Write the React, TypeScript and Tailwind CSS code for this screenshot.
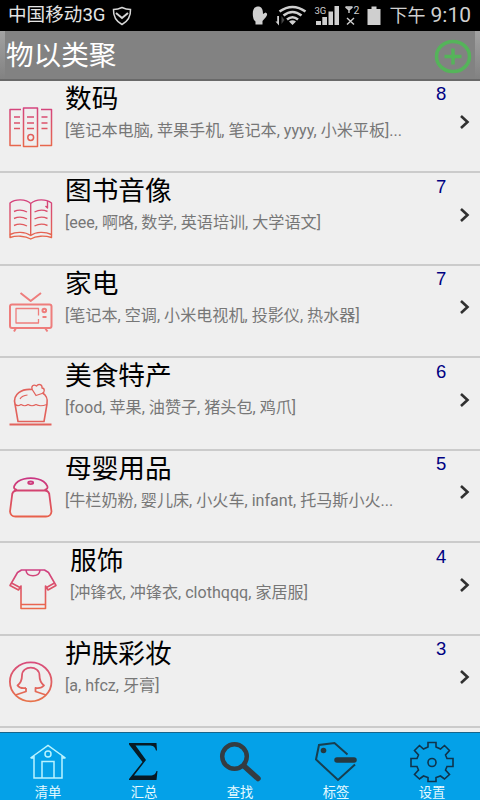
import type { ReactNode } from 'react'

interface Category {
  title: string
  items: string
  count: number
  icon: ReactNode
  indent?: boolean
}

const CATEGORIES: Category[] = [
  { title: '数码', items: '[笔记本电脑, 苹果手机, 笔记本, yyyy, 小米平板]...', count: 8, icon: <FilesIcon /> },
  { title: '图书音像', items: '[eee, 啊咯, 数学, 英语培训, 大学语文]', count: 7, icon: <BookIcon /> },
  { title: '家电', items: '[笔记本, 空调, 小米电视机, 投影仪, 热水器]', count: 7, icon: <TvIcon /> },
  { title: '美食特产', items: '[food, 苹果, 油赞子, 猪头包, 鸡爪]', count: 6, icon: <CakeIcon /> },
  { title: '母婴用品', items: '[牛栏奶粉, 婴儿床, 小火车, infant, 托马斯小火...', count: 5, icon: <BottleIcon /> },
  { title: '服饰', items: '[冲锋衣, 冲锋衣, clothqqq, 家居服]', count: 4, icon: <ShirtIcon />, indent: true },
  { title: '护肤彩妆', items: '[a, hfcz, 牙膏]', count: 3, icon: <BeautyIcon /> },
]

const TABS = [
  { label: '清单', icon: <HomeIcon /> },
  { label: '汇总', icon: <SumIcon /> },
  { label: '查找', icon: <SearchIcon /> },
  { label: '标签', icon: <TagIcon /> },
  { label: '设置', icon: <GearIcon /> },
]

function LineIcon({ id, from = '#d4437f', to = '#e8694a', width = 1.5, children }: {
  id: string
  from?: string
  to?: string
  width?: number
  children: ReactNode
}) {
  return (
    <svg width="50" height="44" viewBox="0 0 50 44" fill="none" stroke={`url(#${id})`} strokeWidth={width} strokeLinejoin="round" className="block">
      <defs>
        <linearGradient id={id} gradientUnits="userSpaceOnUse" x1="0" y1="1" x2="0" y2="42">
          <stop offset="0" stopColor={from} />
          <stop offset="1" stopColor={to} />
        </linearGradient>
      </defs>
      {children}
    </svg>
  )
}

function FilesIcon() {
  return (
    <LineIcon id="files" width={1.5}>
      <path d="M13 3.5H2V39.5H13M33 3.5H43.5V39.5H32M15.5 2H29.5V40.5H15.5Z" />
      <path d="M6 11.01H12M6 17.01H12M6 22.5H12.01M19 11H26M19 17H26M19 22.5H26M33.5 11H39.5M33.5 17H39.5M33.5 22.5H39.5" />
      <circle cx="22.7" cy="31.5" r="2.9" />
    </LineIcon>
  )
}

function BookIcon() {
  return (
    <LineIcon id="book" width={1.4}>
      <path d="M22.7 5.5C18 .8 7 .8 2 5V36.5C8 33.5 17 33.5 22.7 37.5C28 33.5 37 33.5 43.5 36.5V5C38 .8 28 .8 22.7 5.5ZM22.7 5.5V37.5" />
      <path d="M2 36.5V39.5C8 37.5 17 37.5 22.7 41C28 37.5 37 37.5 43.5 39.5V36.5M39.5 3V10L37.5 8" />
      <path d="M6 13.5Q12.5 10.5 19 14M6 20.5Q12.5 17.5 19 21M6 27.5Q12.5 24.5 19 28M26.5 14Q33 10.5 39.5 13.5M26.5 21Q33 17.5 39.5 20.5M26.5 28Q33 24.5 39.5 27.5" />
    </LineIcon>
  )
}

function TvIcon() {
  return (
    <LineIcon id="tv" from="#ee7d7c" to="#ee7d7c" width={2}>
      <path d="M12.5 2L22.7 10L33 2M8 37L6 40.5M37 37L39.5 40.5" />
      <rect x="2" y="13.5" width="41.5" height="23.5" rx="2" />
      <path d="M30.5 28V32H8V17.5H30.5V24.5" strokeWidth="1.3" />
      <circle cx="36.3" cy="19.5" r="1.8" />
      <path d="M34.5 26H38.5" />
    </LineIcon>
  )
}

function CakeIcon() {
  return (
    <LineIcon id="cake" from="#e2625c" to="#e2625c" width={1.6}>
      <path d="M24 6.5C14 5.500 4.5 11 7 21L10 38.5H36L39 21C40 15.5 37.5 11.5 34.500 10" />
      <path d="M7 21Q9.5 24 13 21.5Q17 24 20 21.5Q24 24 28 21.5Q32 24 38.8 21.5" strokeWidth="1.2" />
      <path d="M12 16Q14 12.5 19.5 12" strokeWidth="1.2" />
      <path d="M28 12.500L24.500 7C22.500 3 25.500 .800 28.500 3C30.500 .300 34.500 1.500 34 5C37 5 37 9.500 34 10.500Z" strokeWidth="1.3" />
      <path d="M1.5 41.5H43.5" strokeWidth="2.2" />
    </LineIcon>
  )
}

function BottleIcon() {
  return (
    <LineIcon id="bottle" from="#c93484" to="#e9624a" width={1.8}>
      <path d="M9 14C3.5 13 6.5 8 10 5.5C17 1 28.5 1 35.5 5.5C39 8 42 13 36.5 14" />
      <path d="M8.5 14.5H37Q41.5 15 41.5 20L43.5 35.5Q43 40.5 38 40.5H7.5Q2.5 40.5 2 35.5L4 20Q4 15 8.5 14.5Z" />
      <ellipse cx="22.7" cy="6.8" rx="2.5" ry="1.3" />
    </LineIcon>
  )
}

function ShirtIcon() {
  return (
    <LineIcon id="shirt" from="#cf3f83" to="#ec6a48" width={1.6}>
      <path d="M16.5 2H13.5L9.5 4.5L2 17.5L10.5 22L13 18V40.5H37.5V18L40 22L48 17.5L40.5 4.5L36.5 2H16.5M18 2.5C19 9.5 31 9.5 32 2.5" />
      <path d="M13 36.5H37.5M3.5 15L12 19.5M46.5 15L38.5 19.5" />
    </LineIcon>
  )
}

function BeautyIcon() {
  return (
    <LineIcon id="beauty" from="#d84c7c" to="#e87448" width={1.8}>
      <ellipse cx="22.7" cy="20.8" rx="20.8" ry="19.5" />
      <path d="M18 27.500V29.500M18 27Q12 28 9.500 24.500Q14 21 14 14.500C14 4 31.5 4 31.5 14.500Q31.5 21 36 24.500Q33 28 27.5 27V30.500L38 34M18 27V30.500L7.500 34" />
    </LineIcon>
  )
}

function HomeIcon() {
  return (
    <svg width="44" height="44" viewBox="0 0 44 44" fill="none" stroke="#b9f3ff" strokeWidth="1.5">
      <path d="M4.5 18L22 5.5L39.5 18M8 16V38H36V16M8 18H4.5M36 18H39.5M16 38V21.500H28V38" />
      <circle cx="22" cy="14" r="3" />
    </svg>
  )
}

function SumIcon() {
  return (
    <svg width="44" height="44" viewBox="0 0 44 44" fill="#071a25">
      <path d="M7 3H34.5L35 10.500H34C33 6.500 31 5.500 27 5.500H13.500L24 20L12 35.500H28C32 35.500 33.500 34 34.500 31H35.500L34.500 40H7V39L20.500 22L7 4.500Z" />
    </svg>
  )
}

function SearchIcon() {
  return (
    <svg width="44" height="44" viewBox="0 0 44 44" fill="none" stroke="#343c42">
      <circle cx="16.500" cy="16.500" r="12.300" strokeWidth="4.500" />
      <path d="M26 26L40 38.500" strokeWidth="5.500" strokeLinecap="round" />
    </svg>
  )
}

function TagIcon() {
  return (
    <svg width="44" height="44" viewBox="0 0 44 44" fill="none" stroke="#173f50" strokeWidth="2">
      <path d="M33.500 14.500L20.500 3L5 5L2 19.500L24 40L41 24.500" />
      <circle cx="9.500" cy="10.500" r="2.800" fill="#263940" stroke="none" />
      <path d="M23 20H40" stroke="#263940" strokeWidth="5.500" strokeLinecap="round" />
    </svg>
  )
}

function GearIcon() {
  return (
    <svg width="44" height="44" viewBox="0 0 44 44" fill="none" stroke="#10344c" strokeWidth="1.600">
      <path d="M18 2.500H26V7L30.500 9L34.500 5.500L39.500 10.500L35.500 15L37 18.500H43V26.500H37L35.500 30L39.500 34.500L34.500 39L30.500 36L26 37.500V41.500H18V37.500L13.500 36L9.500 39L4.500 34.500L8.500 30L7 26.500H1V18.500H7L8.500 15L4.500 10.500L9.500 5.500L13.500 9L18 7Z" />
      <circle cx="22" cy="22.500" r="4" />
    </svg>
  )
}

function StatusIcons() {
  return (
    <svg width="136" height="31" viewBox="0 0 136 31" fill="#cfcfcf" className="block">
      {/* glove */}
      <path d="M3 20C1 15 1 7 6.500 6.500C10.500 6.300 12 9 12 14L14.500 12.500Q17.500 13.500 15 17L11.500 21V24.500H4.500V21.500Z" />
      {/* wifi with traffic arrow */}
      <g fill="none" stroke="#cfcfcf" strokeWidth="2.600">
        <path d="M28.500 11.500Q41.500 2.500 54.500 11.500M32.500 15.500Q41.500 8.500 50.500 15.500M36 19.500Q41.500 15 47 19.500" />
      </g>
      <path d="M38 21.500Q41.500 19 45 21.500L41.500 25ZM26.200 16H28V25.500L24.500 21.500H26.200Z" />
      <path d="M30.500 16V24L33.500 20Z" fill="#444" />
      <text x="63.500" y="14" fontSize="9.500" className="font-['Roboto',sans-serif]">3G</text>
      <path d="M65 21H70V25H65ZM71.300 17H76V25H71.300ZM77.500 11.500H82V25H77.500ZM83.500 6H88V25H83.500Z" />
      {/* second sim, no service */}
      <path d="M94.500 7H101.500M94.500 7L98 10L101.500 7M98 7V13M96 18L103 24.500M103 18L96 24.500" fill="none" stroke="#cfcfcf" strokeWidth="1.400" />
      <text x="102.500" y="13.500" fontSize="10.500" className="font-['Roboto',sans-serif]">2</text>
      <path d="M116.500 9H120.500V6.500H125.500V9H129.500V25H116.500Z" />
    </svg>
  )
}

function StatusBar() {
  return (
    <div className="flex h-[31px] items-center bg-black text-[#e4e4e4]">
      <span className="ml-2 text-[18.6px] leading-[31px] whitespace-nowrap">中国移动3G</span>
      <svg width="20" height="20" viewBox="0 0 20 20" fill="none" stroke="#d6d6d6" strokeWidth="1.500" className="ml-[6px]">
        <path d="M10 1.500Q14 3.500 18.500 3.500Q19 13.500 10 18.500Q1 13.500 1.500 3.500Q6 3.500 10 1.500Z" />
        <path d="M4 7L10 12L16 7" strokeWidth="2" />
      </svg>
      <div className="ml-auto">
        <StatusIcons />
      </div>
      <span className="mr-[9px] ml-[3px] flex items-center whitespace-nowrap text-[#d0d0d0]">
        <span className="text-[18px] leading-[31px]">下午</span>
        <span className="ml-[5px] text-[21px] leading-[31px]">9:10</span>
      </span>
    </div>
  )
}

function CategoryRow({ title, items, count, icon, indent }: Category) {
  return (
    <li className="flex h-[92.5px] border-b-2 border-[#cbcbcb]">
      <div className="mt-[25px] ml-2 w-[50px] shrink-0">{icon}</div>
      <div className={indent ? 'ml-3 w-[360px]' : 'ml-[7px] w-[365px]'}>
        <h2 className="text-[26.7px] leading-[37px] whitespace-nowrap text-black">{title}</h2>
        <p className="mt-px text-[16.1px] leading-[24px] whitespace-nowrap text-[#777]">{items}</p>
      </div>
      <span className="mt-[3.5px] ml-[6px] w-[11px] font-['Liberation_Sans',sans-serif] text-[18.5px] leading-5 text-[#000082]">{count}</span>
      <svg width="12" height="16" viewBox="0 0 12 16" fill="none" stroke="#303030" strokeWidth="2.600" className="mt-[33.5px] ml-[12px]">
        <path d="M2 2L8.500 8L2 14" />
      </svg>
    </li>
  )
}

export default function App() {
  return (
    <div className="flex h-[800px] w-[480px] flex-col overflow-hidden bg-[#efefef] font-['Roboto','Noto_Sans_CJK_SC',sans-serif]">
      <StatusBar />
      <header className="flex h-[49.5px] shrink-0 items-stretch border-b-2 border-[#696969] bg-[#828282]">
        <div className="w-[5px] bg-linear-to-b from-[#a2a2a2] to-[#828282]" />
        <h1 className="ml-px text-[27.6px] leading-[50px] text-white">物以类聚</h1>
        <svg width="38" height="36" viewBox="0 0 38 36" fill="none" stroke="#55b45a" className="mt-[7px] ml-auto">
          <ellipse cx="19" cy="18.500" rx="16.500" ry="15" strokeWidth="3.500" />
          <path d="M10.500 18.500H27.500M19 10.500V26.500" strokeWidth="3.500" />
        </svg>
        <div className="ml-[3px] w-[5px] bg-linear-to-b from-[#a2a2a2] to-[#828282]" />
      </header>
      <ul>
        {CATEGORIES.map(c => <CategoryRow key={c.title} {...c} />)}
      </ul>
      <nav className="mt-auto grid h-[68px] shrink-0 grid-cols-5 border-t border-[#17658b] bg-[#04a1e8]">
        {TABS.map(tab => (
          <div key={tab.label} className="flex flex-col items-center pt-[7px]">
            {tab.icon}
            <span className="text-[13.3px] leading-[18px] text-[#e6faff]">{tab.label}</span>
          </div>
        ))}
      </nav>
    </div>
  )
}
